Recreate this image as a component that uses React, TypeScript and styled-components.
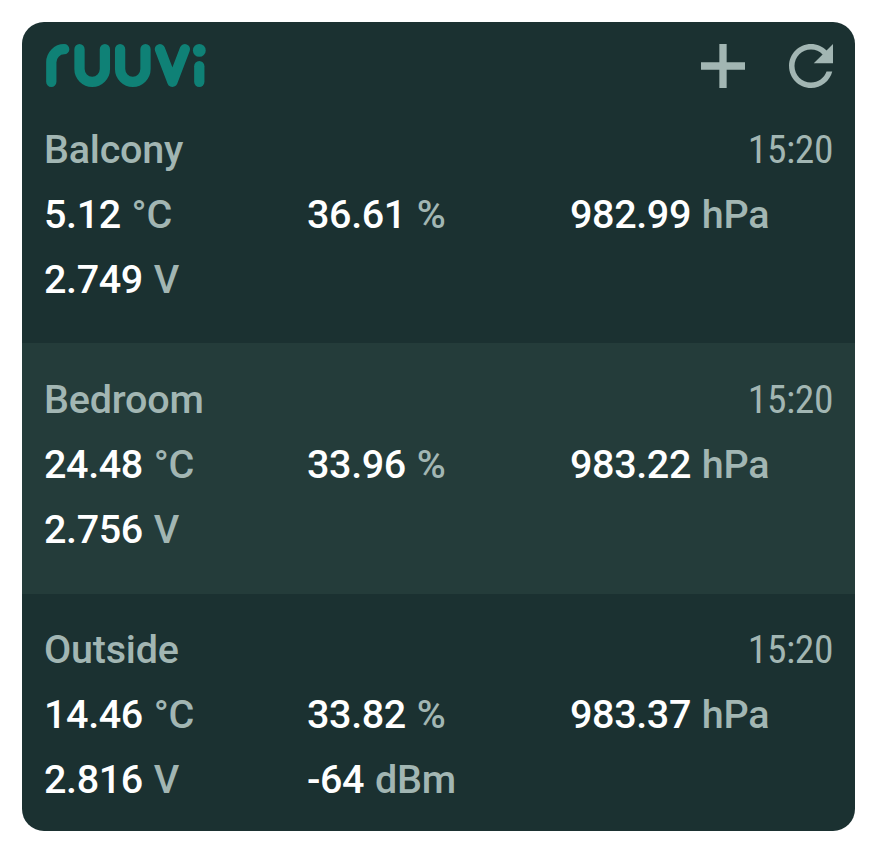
import React from 'react';
import styled, { createGlobalStyle } from 'styled-components';

const GlobalStyle = createGlobalStyle`
  * { box-sizing: border-box; }
  body { margin: 0; background: #fff; font-family: Roboto, sans-serif; }
`;

const Page = styled.main`
  padding: 22px;
  height: 853px;
`;

const Widget = styled.section`
  width: 833px;
  height: 809px;
  border-radius: 22px;
  background: #1b3131;
  overflow: hidden;
  display: flex;
  flex-direction: column;
`;

const Header = styled.header`
  height: 72px;
  flex: none;
  padding: 0 21px 0 22px;
  display: flex;
  align-items: flex-start;
  justify-content: space-between;
`;

const Logo = styled.svg`
  width: 166px;
  height: 50px;
  margin-top: 18px;
`;

const Actions = styled.div`
  display: flex;
  gap: 42px;
  margin-top: 21px;
`;

const IconButton = styled.button`
  width: 46px;
  height: 46px;
  padding: 0;
  border: 0;
  background: none;
  color: #a2b6b3;
  svg { display: block; }
`;

const Sensor = styled.article<{ $height: number; $top: number; $shaded?: boolean }>`
  flex: none;
  height: ${(p) => p.$height}px;
  padding: ${(p) => p.$top}px 22px 0;
  background: ${(p) => (p.$shaded ? '#243c3a' : 'transparent')};
`;

const SensorHead = styled.div`
  display: flex;
  justify-content: space-between;
  height: 65px;
  line-height: 65px;
  color: #a2b6b3;
`;

const Name = styled.h2`
  margin: 0;
  font-size: 39.5px;
  letter-spacing: -0.2px;
  font-weight: 500;
`;

const Time = styled.time`
  font-size: 39.5px;
  line-height: 66px;
  letter-spacing: -0.4px;
  font-family: 'Roboto Condensed', Roboto, sans-serif;
  font-stretch: condensed;
`;

const Readings = styled.div`
  display: grid;
  grid-template-columns: repeat(3, 263px);
  grid-auto-rows: 65px;
  line-height: 65px;
`;

const Value = styled.div`
  font-size: 39.5px;
  letter-spacing: -0.38px;
  font-weight: 500;
  color: #fff;
  white-space: pre;
  word-spacing: 1.3px;
`;

const Unit = styled.span`
  color: #a2b6b3;
  letter-spacing: -0.25px;
`;

const sensors = [
  { name: 'Balcony', height: 249, top: 23, values: [['5.12', '°C'], ['36.61', '%'], ['982.99', 'hPa'], ['2.749', 'V']] },
  { name: 'Bedroom', height: 251, top: 24, shaded: true, values: [['24.48', '°C'], ['33.96', '%'], ['983.22', 'hPa'], ['2.756', 'V']] },
  { name: 'Outside', height: 237, top: 23, values: [['14.46', '°C'], ['33.82', '%'], ['983.37', 'hPa'], ['2.816', 'V'], ['-64', 'dBm']] },
];

export default function App() {
  return (
    <Page>
      <GlobalStyle />
      <Widget>
        <Header>
          <Logo viewBox="0 0 166 50" fill="none" stroke="#0f8176" strokeWidth="10.3" strokeLinecap="round" strokeLinejoin="round" role="img" aria-label="ruuvi">
            <path d="M7.3 41.8V22.2A13 13 0 0 1 20.2 9.2" />
            <path d="M35.5 9.2V29.1A12.7 12.7 0 0 0 60.9 29.1V9.2" />
            <path d="M76.1 9.2V29.1A12.7 12.7 0 0 0 101.5 29.1V9.2" />
            <path d="M115.9 9.2L128.4 41.8L140.9 9.2" />
            <path d="M155.3 26.2V41.8" />
            <circle cx="155.3" cy="10.4" r="6.4" fill="#0f8176" stroke="none" />
          </Logo>
          <Actions>
            <IconButton aria-label="Add">
              <svg width="46" height="46" viewBox="0 0 46 46"><path d="M23 1V45M1 23H45" stroke="currentColor" strokeWidth="7.3" /></svg>
            </IconButton>
            <IconButton aria-label="Refresh">
              <svg width="46" height="46" viewBox="0 0 46 46">
                <path
                  transform="translate(-10 -10) scale(2.75)"
                  fill="currentColor"
                  d="M17.65 6.35C16.2 4.9 14.21 4 12 4c-4.42 0-7.99 3.58-7.99 8s3.57 8 7.99 8c3.73 0 6.84-2.55 7.73-6h-2.08c-.82 2.33-3.04 4-5.65 4-3.31 0-6-2.69-6-6s2.69-6 6-6c1.66 0 3.14.69 4.22 1.78L13 11h7V4l-2.35 2.35z"
                />
              </svg>
            </IconButton>
          </Actions>
        </Header>
        {sensors.map((s) => (
          <Sensor key={s.name} $height={s.height} $top={s.top} $shaded={s.shaded}>
            <SensorHead><Name>{s.name}</Name><Time>15:20</Time></SensorHead>
            <Readings>
              {s.values.map(([v, u]) => <Value key={u}>{v} <Unit>{u}</Unit></Value>)}
            </Readings>
          </Sensor>
        ))}
      </Widget>
    </Page>
  );
}
